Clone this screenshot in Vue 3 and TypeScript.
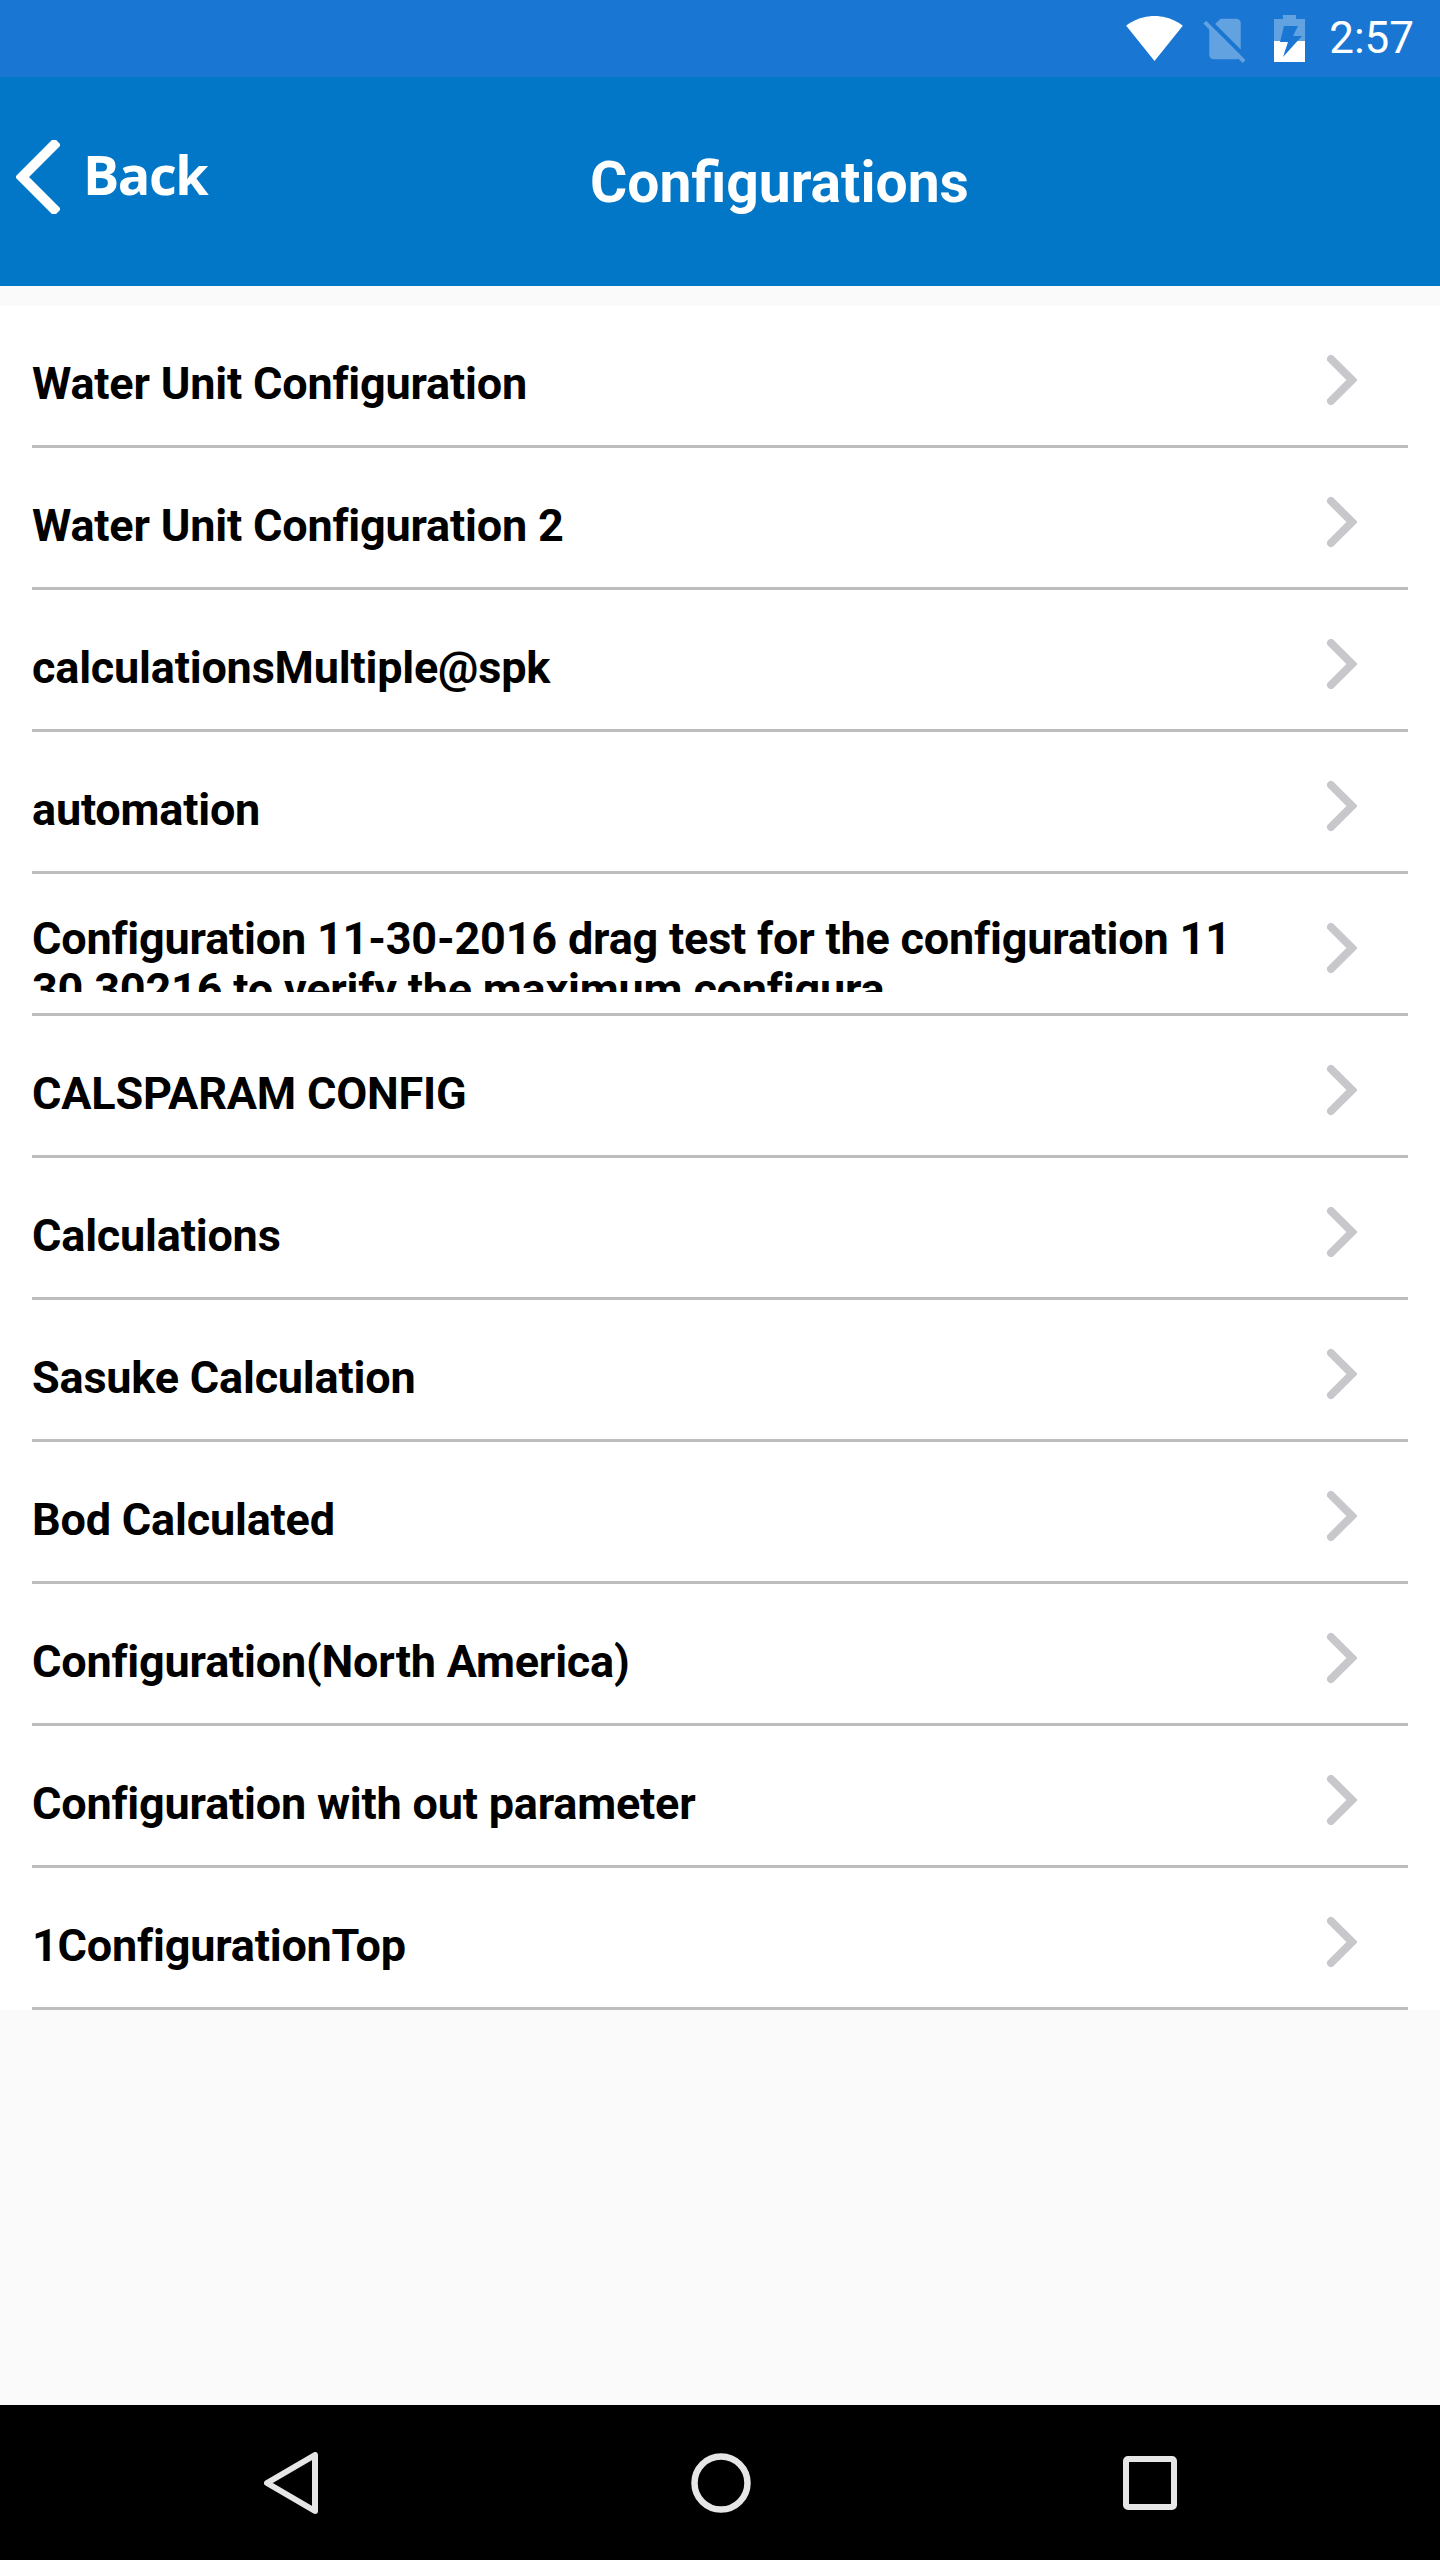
<script setup lang="ts">
interface Row {
  text: string
  clipped?: boolean
}
const rows: Row[] = [
  { text: 'Water Unit Configuration' },
  { text: 'Water Unit Configuration 2' },
  { text: 'calculationsMultiple@spk' },
  { text: 'automation' },
  { text: 'Configuration 11-30-2016 drag test for the configuration 11 30 30216 to verify the maximum configura', clipped: true },
  { text: 'CALSPARAM CONFIG' },
  { text: 'Calculations' },
  { text: 'Sasuke Calculation' },
  { text: 'Bod Calculated' },
  { text: 'Configuration(North America)' },
  { text: 'Configuration with out parameter' },
  { text: '1ConfigurationTop' },
]
</script>

<template>
  <div class="screen">
    <div class="status">
      <svg class="wifi" width="57" height="45" viewBox="0.36 3 23.28 18.5">
        <path d="M12.01 21.49L23.64 7c-.45-.34-4.93-4-11.64-4C5.28 3 .81 6.66.36 7l11.64 14.49.01.01z" fill="#fff" />
      </svg>
      <svg class="sim" width="54" height="54" viewBox="0 0 24 24">
        <path d="M19 5c0-1.1-.89-2-1.99-2h-7L7.66 5.34 19 16.68V5zM3.65 3.88L2.38 5.15 5 7.77V19c0 1.1.9 2 2 2h10.01c.35 0 .67-.1.96-.26l1.88 1.88 1.27-1.27L3.65 3.88z" fill="#fff" fill-opacity=".32" />
      </svg>
      <svg class="battery" width="31" height="47" viewBox="0 0 31 47">
        <path d="M9 0 H22 V4 H31 V26 H0 V4 H9 Z" fill="#fff" fill-opacity=".32" />
        <path d="M0 26 H31 V47 H0 Z" fill="#fff" />
        <path d="M24 11 L19 21 H28 L9 42 L14 27 H6 L10 11 Z" fill="#1976d2" />
      </svg>
      <span class="time">2:57</span>
    </div>
    <header class="header">
      <div class="back">
        <svg width="44" height="74" viewBox="0 0 44 74">
          <path d="M38 5 L6 37 L38 69" fill="none" stroke="#fff" stroke-width="10" stroke-linecap="square" />
        </svg>
        <span class="back-label">Back</span>
      </div>
      <h1 class="title">Configurations</h1>
    </header>
    <main class="content">
      <ul class="list">
        <li v-for="row in rows" :key="row.text" class="row">
          <div class="label" :class="{ clipped: row.clipped }">{{ row.text }}</div>
          <svg class="chev" width="30" height="50" viewBox="0 0 30 50">
            <path d="M4 4 L25 25 L4 46" fill="none" stroke="#c8c7cc" stroke-width="8" stroke-linecap="round" stroke-linejoin="miter" />
          </svg>
        </li>
      </ul>
    </main>
    <nav class="nav">
      <svg width="54" height="62" viewBox="0 0 54 62">
        <path d="M51 3 V59 L3 31 Z" fill="none" stroke="#e6e6e6" stroke-width="6" stroke-linejoin="round" />
      </svg>
      <svg width="60" height="62" viewBox="0 0 60 62">
        <circle cx="30" cy="31" r="26.5" fill="none" stroke="#e6e6e6" stroke-width="6.5" />
      </svg>
      <svg width="54" height="54" viewBox="0 0 54 54">
        <rect x="3" y="3" width="48" height="48" rx="2" fill="none" stroke="#e6e6e6" stroke-width="6" />
      </svg>
    </nav>
  </div>
</template>

<style scoped>
.screen {
  width: 1440px;
  height: 2560px;
  display: flex;
  flex-direction: column;
  background: #fafafa;
  font-family: Roboto, "Liberation Sans", sans-serif;
  overflow: hidden;
}
.status {
  height: 77px;
  flex: none;
  background: #1976d2;
  display: flex;
  align-items: center;
  padding-right: 26px;
  justify-content: flex-end;
  color: #fff;
}
.wifi { margin-right: 15px; }
.sim { margin-right: 22px; }
.battery { margin-right: 24px; }
.time { font-size: 44px; line-height: 77px; }
.header {
  height: 209px;
  flex: none;
  background: #0277c8;
  display: flex;
  align-items: center;
  color: #fff;
}
.back {
  width: 590px;
  flex: none;
  display: flex;
  align-items: center;
  padding-left: 16px;
  box-sizing: border-box;
}
.back svg { margin-bottom: 10px; }
.back-label {
  font-family: "Open Sans", sans-serif;
  font-weight: 700;
  font-size: 54px;
  letter-spacing: -1.5px;
  line-height: 60px;
  margin-left: 23px;
  margin-bottom: 16px;
}
.title {
  margin: 0;
  font-size: 57px;
  font-weight: 700;
  line-height: 66px;
  padding-top: 2px;
}
.content { flex: 1; padding-top: 20px; }
.list { list-style: none; margin: 0; padding: 0; background: #fff; }
.row {
  height: 142px;
  box-sizing: border-box;
  position: relative;
  display: flex;
  align-items: center;
  padding-left: 32px;
  padding-top: 6px;
}
.row::after {
  content: "";
  position: absolute;
  left: 32px;
  right: 32px;
  bottom: 0;
  height: 3px;
  background: #bdbdbd;
}
.label {
  width: 1210px;
  font-size: 45px;
  letter-spacing: -0.2px;
  font-weight: 700;
  line-height: 50px;
  color: #000;
  margin-top: 8px;
}
.label.clipped {
  height: 79px;
  line-height: 51px;
  overflow: hidden;
  margin-top: 8px;
}
.chev { margin-left: 85px; }
.nav {
  height: 155px;
  flex: none;
  background: #000;
  display: flex;
  align-items: center;
  justify-content: space-between;
  padding: 0 263px 0 264px;
}
</style>
